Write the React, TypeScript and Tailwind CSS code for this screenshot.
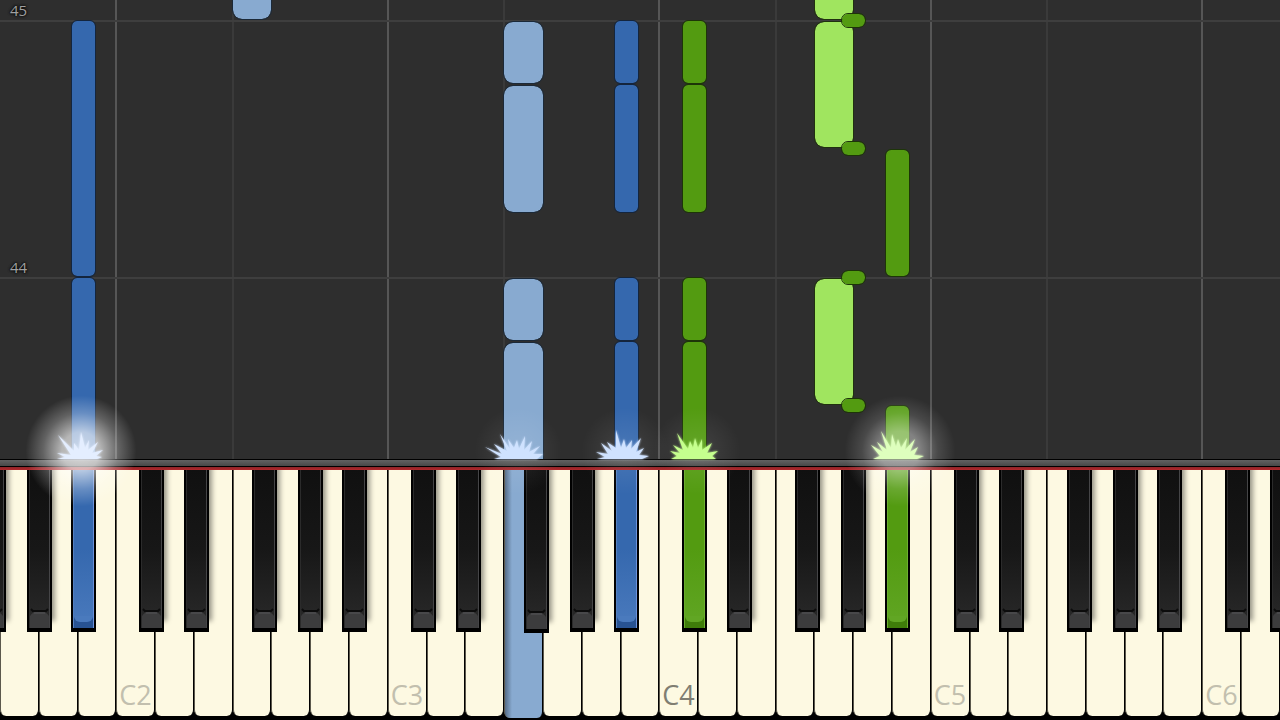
import * as React from "react"
import { clsx } from "clsx"

const WHITE_COUNT = 33
const FIRST_C = 3
const BASE_WIDTH = 1280
const OCTAVE = (BASE_WIDTH / WHITE_COUNT) * 7
const BLACK_OFFSETS = [23, 68, 136, 182, 226]

type Tone = "blue" | "sky" | "green" | "lime"

type Note = {
  // white key index, or [octave, black key] for sharps
  key: number | [number, number]
  from: number
  length: number
  tone: Tone
}

const percent = (px: number) => `${(px / BASE_WIDTH) * 100}%`
const whiteLeft = (index: number) => `${(index / WHITE_COUNT) * 100}%`
const blackLeft = (octave: number, step: number) =>
  percent((FIRST_C / WHITE_COUNT) * BASE_WIDTH + (octave - 2) * OCTAVE + BLACK_OFFSETS[step])

const NOTES: Note[] = [
  { key: [1, 4], from: 0, length: 181, tone: "blue" },
  { key: [1, 4], from: 183, length: 255, tone: "blue" },
  { key: 6, from: 440, length: 60, tone: "sky" },
  { key: 13, from: 0, length: 116, tone: "sky" },
  { key: 13, from: 119, length: 61, tone: "sky" },
  { key: 13, from: 247, length: 126, tone: "sky" },
  { key: 13, from: 376, length: 61, tone: "sky" },
  { key: [3, 4], from: 0, length: 117, tone: "blue" },
  { key: [3, 4], from: 119, length: 62, tone: "blue" },
  { key: [3, 4], from: 247, length: 127, tone: "blue" },
  { key: [3, 4], from: 376, length: 62, tone: "blue" },
  { key: [4, 0], from: 0, length: 117, tone: "green" },
  { key: [4, 0], from: 119, length: 62, tone: "green" },
  { key: [4, 0], from: 247, length: 127, tone: "green" },
  { key: [4, 0], from: 376, length: 62, tone: "green" },
  { key: 21, from: 55, length: 125, tone: "lime" },
  { key: 21, from: 312, length: 125, tone: "lime" },
  { key: 21, from: 440, length: 60, tone: "lime" },
  { key: [4, 3], from: 47, length: 13, tone: "green" },
  { key: [4, 3], from: 175, length: 13, tone: "green" },
  { key: [4, 3], from: 304, length: 13, tone: "green" },
  { key: [4, 3], from: 432, length: 13, tone: "green" },
  { key: [4, 4], from: 0, length: 53, tone: "green" },
  { key: [4, 4], from: 183, length: 126, tone: "green" },
]

const NOTE_TONES: Record<Tone, string> = {
  blue: "bg-[#3568ae] outline-[#14253d]",
  sky: "bg-[#88aad0] outline-[#1b2938]",
  green: "bg-[#539b11] outline-[#1d3508]",
  lime: "bg-[#a0e55f] outline-[#20310f]",
}

const BARS = [
  { label: "45", bottom: 437 },
  { label: "44", bottom: 180 },
]

function Grid() {
  return (
    <>
      {[3, 6, 10, 13, 17, 20, 24, 27, 31].map((index) => (
        <div
          key={index}
          className={clsx(
            "absolute inset-y-0 -ml-px w-0.5",
            index % 7 === FIRST_C ? "bg-[#565656]" : "bg-[#3a3a3a]"
          )}
          style={{ left: whiteLeft(index) }}
        />
      ))}
      {BARS.map((bar) => (
        <div
          key={bar.label}
          className="absolute inset-x-0 h-0.5 bg-[#3e3e3e]"
          style={{ bottom: bar.bottom }}
        >
          <span className="absolute bottom-1 left-2.5 text-[15px] leading-4 text-[#a0a0a0] [text-shadow:0_0_3px_#000,0_0_3px_#000]">
            {bar.label}
          </span>
        </div>
      ))}
    </>
  )
}

function NoteBar({ note }: { note: Note }) {
  const white = typeof note.key === "number"
  const small = note.length < 20
  return (
    <div
      className={clsx(
        "absolute outline",
        white ? "w-[3%] rounded-[9px]" : "ml-px w-[1.8%]",
        !white && (small ? "rounded-md" : "rounded-[5px]"),
        note.from === 0 && "rounded-b-none",
        NOTE_TONES[note.tone]
      )}
      style={{
        left: typeof note.key === "number" ? whiteLeft(note.key) : blackLeft(...note.key),
        bottom: note.from,
        height: note.length,
      }}
    />
  )
}

const SPARKS = [
  { x: 77, tone: "#e4eeff", glow: "bright", d: "M14 40 22 38 14 34 28 36 15 16 31 32 31 24 36 31 38 13 42 29 46 21 45 31 55 23 49 34 60 31 53 37 59 38 54 40Z" },
  { x: 514, tone: "#cfe2ff", glow: "faint", d: "M14 40 21 38 5 28 22 35 14 25 27 32 20 15 30 30 28 20 34 29 37 21 39 30 45 17 44 31 52 22 49 33 60 27 53 35 63 35 57 40Z" },
  { x: 621, tone: "#cfe2ff", glow: "faint", d: "M10 40 18 38 9 33 21 35 14 24 25 32 20 23 29 29 29 11 34 29 37 20 39 29 45 21 44 30 54 19 49 33 57 29 52 36 62 37 55 40Z" },
  { x: 693, tone: "#c5ff8e", glow: "faint", d: "M12 40 18 37 11 32 21 34 14 26 24 31 18 14 29 30 31 22 34 29 36 19 39 29 43 20 43 31 53 24 48 34 59 32 53 37 57 40Z" },
  { x: 896, tone: "#deffbd", glow: "medium", d: "M11 40 18 37 9 26 21 33 15 23 25 31 19 12 29 29 30 15 34 28 36 20 39 29 45 19 43 31 53 20 48 33 56 28 52 36 62 37 55 40Z" },
]

const GLOWS: Record<string, string> = {
  bright:
    "bg-[radial-gradient(circle,rgba(255,255,255,0.75)_0%,rgba(255,255,255,0.65)_24%,rgba(255,255,255,0.25)_48%,transparent_70%)]",
  medium:
    "bg-[radial-gradient(circle,rgba(255,255,255,0.45)_0%,rgba(255,255,255,0.4)_25%,rgba(255,255,255,0.13)_48%,transparent_70%)]",
  faint: "bg-[radial-gradient(circle,rgba(255,255,255,0.1)_0%,transparent_55%)]",
}

function Spark({ x, tone, glow, d }: (typeof SPARKS)[number]) {
  return (
    <>
      <div
        className={clsx(
          "pointer-events-none absolute bottom-0 z-20 -mb-12 -ml-14 size-28 rounded-full",
          GLOWS[glow]
        )}
        style={{ left: percent(x + 4) }}
      />
      <svg
        className="pointer-events-none absolute bottom-0 z-20 -ml-[34px] h-10 w-[68px]"
        style={{ left: percent(x), filter: `drop-shadow(0 0 1px ${tone})` }}
        viewBox="0 0 68 40"
        aria-hidden="true"
      >
        <path d={d} fill={tone} />
      </svg>
    </>
  )
}

function WhiteKey({ index }: { index: number }) {
  const octave = index % 7 === FIRST_C ? (index - FIRST_C) / 7 + 2 : null
  const pressed = index === 13
  return (
    <button
      type="button"
      aria-label={octave ? undefined : `White key ${index + 1}`}
      className={clsx(
        "flex min-w-0 flex-1 items-end rounded-b-md border-r border-l border-r-black border-l-[#5c594d] pb-[5px] pl-0.5 text-left text-[27px] leading-8",
        pressed
          ? "-mb-0.5 bg-[#88aad0] bg-[linear-gradient(to_right,#566d88,#88aad0_7px)]"
          : "bg-[#fdf9e2]",
        octave === 4 ? "text-[#807e72]" : "text-[#c2bfae]"
      )}
    >
      {octave && `C${octave}`}
    </button>
  )
}

const KEY_FACES = {
  black: "border-r-[#454547] border-l-[#2b2b2b] bg-[linear-gradient(#101010,#171717_50%,#2a2a2a)]",
  blue: "border-r-[#6b92dd] border-l-[#5480c0] bg-[linear-gradient(#3568ae,#3568ae_50%,#4a7abd)]",
  green: "border-r-[#6eb02f] border-l-[#69ac2c] bg-[linear-gradient(#539b11,#539b11_50%,#61a624)]",
}

function BlackKey({ octave, step }: { octave: number; step: number }) {
  const id = `${octave}-${step}`
  const face = id === "1-4" || id === "3-4" ? "blue" : id === "4-0" || id === "4-4" ? "green" : "black"
  const lowered = id === "3-2"
  return (
    <button
      type="button"
      aria-label={`Black key ${step + 1}, octave ${octave}`}
      className={clsx(
        "absolute top-0 flex w-[1.95%] flex-col bg-black px-0.5 pb-1",
        lowered ? "h-[163px]" : "h-[162px]",
        face === "black" && "shadow-[4px_-10px_5px_-1px_rgba(0,0,0,0.4)]"
      )}
      style={{ left: blackLeft(octave, step) }}
    >
      <span className={clsx("flex w-full flex-1 flex-col justify-end border-r border-l", KEY_FACES[face])}>
        {face === "black" && (
          <svg className="h-5 w-full" viewBox="0 0 20 20" preserveAspectRatio="none" aria-hidden="true">
            <path d="M0 20V8Q3 4 6 4H14Q17 4 20 8V20Z" fill="#3c3c3d" />
            <path d="M1 1 3 3H17L19 1" fill="none" stroke="#0c0c0c" strokeWidth="2" />
            <path d="M4 5H16" stroke="#565658" />
          </svg>
        )}
        {face === "blue" && (
          <span className="w-full bg-[#285393] pb-1.5">
            <span className="block h-1.5 w-full rounded-b-md bg-[#4a7abd]" />
          </span>
        )}
        {face === "green" && (
          <span className="w-full bg-[#3f7d0a] pb-1.5">
            <span className="block h-1.5 w-full rounded-b-md bg-[#61a624]" />
          </span>
        )}
      </span>
    </button>
  )
}

function Keyboard() {
  return (
    <div className="relative flex h-[250px] shrink-0 bg-black pb-1">
      {Array.from({ length: WHITE_COUNT }, (_, index) => (
        <WhiteKey key={index} index={index} />
      ))}
      <div className="absolute inset-x-0 top-0 h-[170px] overflow-hidden">
        {[1, 2, 3, 4, 5, 6].map((octave) => (
          <React.Fragment key={octave}>
            {BLACK_OFFSETS.map((_, step) => {
              if (octave === 1 && step < 2) return null
              if (octave === 6 && step > 1) return null
              return <BlackKey key={step} octave={octave} step={step} />
            })}
          </React.Fragment>
        ))}
      </div>
    </div>
  )
}

export default function App() {
  return (
    <main className="flex h-screen min-h-[480px] flex-col overflow-hidden bg-black font-['Open_Sans','Noto_Sans',sans-serif]">
      <section aria-label="Piano roll" className="relative min-h-0 flex-1 bg-[#2e2e2e]">
        <div className="absolute inset-0 overflow-hidden">
          <Grid />
          {NOTES.map((note, index) => (
            <NoteBar key={index} note={note} />
          ))}
        </div>
        {SPARKS.map((spark) => (
          <Spark key={spark.x} {...spark} />
        ))}
      </section>
      <div className="h-2 shrink-0 border-t border-b border-black bg-[linear-gradient(#626262,#484848)]" />
      <div className="h-[3px] shrink-0 bg-[linear-gradient(#8e2428,#b3282c)]" />
      <Keyboard />
    </main>
  )
}
